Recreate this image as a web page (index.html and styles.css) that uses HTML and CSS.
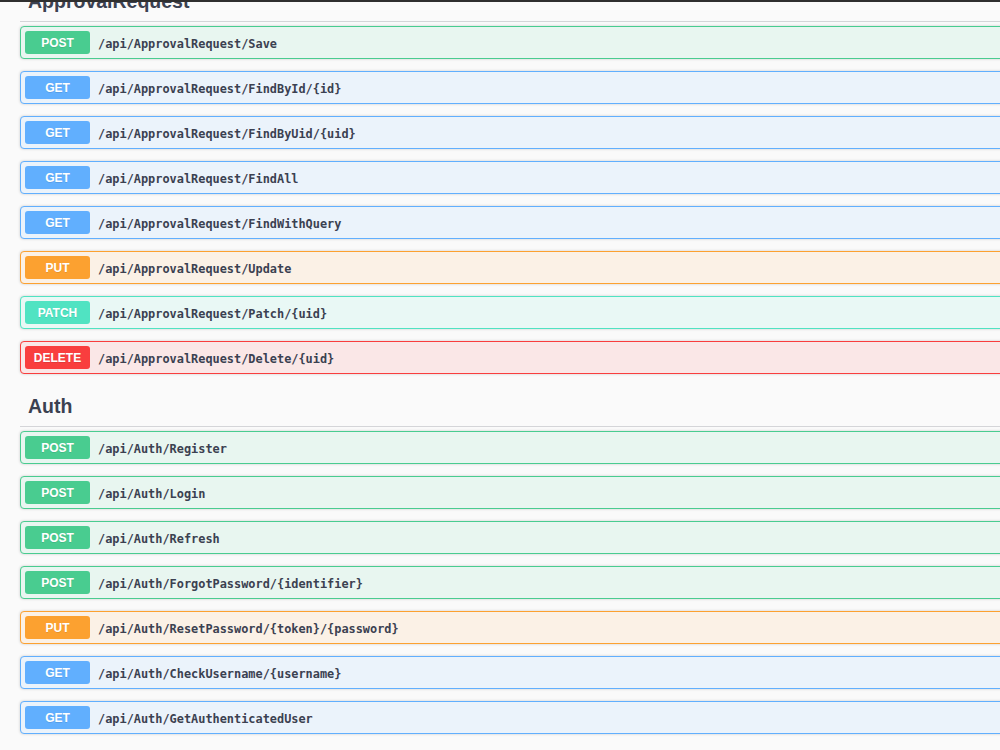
FILE: index.html
```html
<!DOCTYPE html>
<html lang="en">
<head>
<meta charset="utf-8">
<title>Swagger UI</title>
<link rel="stylesheet" href="styles.css">
</head>
<body>
<div class="topbar"></div>
<main class="wrapper">
  <section class="tag">
    <h3 class="tag-title">ApprovalRequest</h3>
    <div class="op op-post"><span class="method">POST</span><span class="path">/api/ApprovalRequest/Save</span></div>
    <div class="op op-get"><span class="method">GET</span><span class="path">/api/ApprovalRequest/FindById/{id}</span></div>
    <div class="op op-get"><span class="method">GET</span><span class="path">/api/ApprovalRequest/FindByUid/{uid}</span></div>
    <div class="op op-get"><span class="method">GET</span><span class="path">/api/ApprovalRequest/FindAll</span></div>
    <div class="op op-get"><span class="method">GET</span><span class="path">/api/ApprovalRequest/FindWithQuery</span></div>
    <div class="op op-put"><span class="method">PUT</span><span class="path">/api/ApprovalRequest/Update</span></div>
    <div class="op op-patch"><span class="method">PATCH</span><span class="path">/api/ApprovalRequest/Patch/{uid}</span></div>
    <div class="op op-delete"><span class="method">DELETE</span><span class="path">/api/ApprovalRequest/Delete/{uid}</span></div>
  </section>
  <section class="tag">
    <h3 class="tag-title">Auth</h3>
    <div class="op op-post"><span class="method">POST</span><span class="path">/api/Auth/Register</span></div>
    <div class="op op-post"><span class="method">POST</span><span class="path">/api/Auth/Login</span></div>
    <div class="op op-post"><span class="method">POST</span><span class="path">/api/Auth/Refresh</span></div>
    <div class="op op-post"><span class="method">POST</span><span class="path">/api/Auth/ForgotPassword/{identifier}</span></div>
    <div class="op op-put"><span class="method">PUT</span><span class="path">/api/Auth/ResetPassword/{token}/{password}</span></div>
    <div class="op op-get"><span class="method">GET</span><span class="path">/api/Auth/CheckUsername/{username}</span></div>
    <div class="op op-get"><span class="method">GET</span><span class="path">/api/Auth/GetAuthenticatedUser</span></div>
  </section>
</main>
</body>
</html>
```
FILE: styles.css
```css
html, body {
  margin: 0;
  padding: 0;
  background: #fafafa;
  overflow: hidden;
}

body {
  font-family: "Liberation Sans", Arial, sans-serif;
  color: #3b4151;
}

.topbar {
  position: fixed;
  top: 0;
  left: 0;
  right: 0;
  height: 2px;
  background: #2f2f2f;
  z-index: 10;
}

.wrapper {
  width: 1100px;
  margin-top: -19px;
  padding-left: 20px;
}

.tag-title {
  margin: 0 0 4px 0;
  padding: 8px 0 8px 8px;
  font-size: 19.5px;
  line-height: 24px;
  font-weight: 700;
  color: #3b4151;
  border-bottom: 1px solid rgba(59, 65, 81, 0.2);
}

.op {
  display: flex;
  align-items: center;
  padding: 4px;
  margin-bottom: 12px;
  border: 1px solid;
  border-radius: 4px;
  box-shadow: 0 0 3px rgba(0, 0, 0, 0.19);
}

.method {
  display: flex;
  align-items: center;
  justify-content: center;
  box-sizing: border-box;
  width: 65px;
  height: 23px;
  padding-top: 1px;
  border-radius: 3px;
  font-size: 12px;
  font-weight: 700;
  color: #fff;
  text-shadow: 0 1px 0 rgba(0, 0, 0, 0.1);
}

.path {
  padding: 2px 0 0 8px;
  font-family: "DejaVu Sans Mono", "Liberation Mono", monospace;
  font-size: 11.9px;
  font-weight: 700;
  color: #3b4151;
}

.op-post { background: #e8f6f0; border-color: #49cc90; }
.op-post .method { background: #49cc90; }

.op-get { background: #ebf3fb; border-color: #61affe; }
.op-get .method { background: #61affe; }

.op-put { background: #fbf1e6; border-color: #fca130; }
.op-put .method { background: #fca130; }

.op-patch { background: #e9f8f5; border-color: #50e3c2; }
.op-patch .method { background: #50e3c2; }

.op-delete { background: #fae7e7; border-color: #f93e3e; }
.op-delete .method { background: #f93e3e; }
```
